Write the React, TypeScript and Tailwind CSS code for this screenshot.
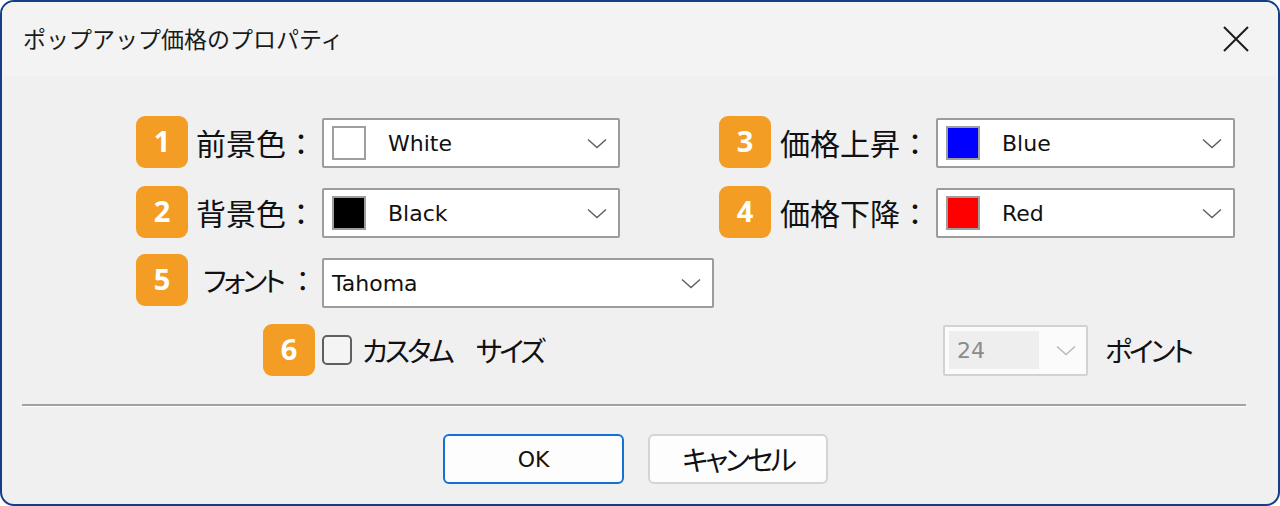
import type { ReactNode } from 'react';

const jp = "font-['Noto_Sans_CJK_JP',sans-serif]";
const latin = "font-['DejaVu_Sans',sans-serif]";
// katakana in the original dialog font is narrower than Noto's
const kana = `${jp} text-[28px] text-[#111] tracking-[-3px] [font-feature-settings:'palt']`;

function Badge({ n }: { n: number }) {
  return (
    <div className="flex h-[52px] w-[52px] shrink-0 items-center justify-center rounded-[9px] bg-[#f49d25] pb-[2px] font-['Open_Sans',sans-serif] text-[29px] font-bold text-white">
      {n}
    </div>
  );
}

function Chevron({ tone = '#5e5e5e' }: { tone?: string }) {
  return (
    <svg width="20" height="11" viewBox="0 0 20 11" fill="none">
      <path d="M1 1.5L10 9.5L19 1.5" stroke={tone} strokeWidth="1.4" />
    </svg>
  );
}

function Select({ width, swatch, label }: { width: string; swatch?: string; label: string }) {
  return (
    <div
      className={`flex h-[50px] items-center justify-between rounded-[2px] border-2 border-[#9c9c9c] bg-white pl-[8px] pr-[11px] ${width}`}
    >
      <div className="flex items-center">
        {swatch && (
          <div className={`mr-[22px] h-[34px] w-[34px] border-2 border-[#9e9e9e] ${swatch}`} />
        )}
        <span className={`${latin} text-[22px] text-[#111]`}>{label}</span>
      </div>
      <Chevron />
    </div>
  );
}

function Label({ children, box, pad }: { children: ReactNode; box: string; pad: string }) {
  return (
    <div className={`flex h-[52px] shrink-0 items-center ${box} ${pad} ${jp} text-[30px] text-[#111]`}>
      {children}
    </div>
  );
}

export default function App() {
  return (
    <div className="h-[506px] w-[1280px] bg-white">
      <div className="flex h-full flex-col overflow-hidden rounded-[14px] border-2 border-[#123f88] bg-[#f0f0f0]">
        <div className="flex h-[74px] shrink-0 items-center justify-between bg-[#f3f3f3] pl-[21px] pr-[29px]">
          <div className={`${jp} pb-[2px] text-[23px] text-[#1b1b1b]`}>ポップアップ価格のプロパティ</div>
          <svg width="26" height="26" viewBox="0 0 26 26" fill="none">
            <path d="M1 1L25 25M25 1L1 25" stroke="#1c1c1c" strokeWidth="2" />
          </svg>
        </div>

        <div className="flex flex-col pt-[40px]">
          <div className="flex items-start pl-[134px]">
            <div className="flex w-[583px] items-start">
              <Badge n={1} />
              <Label box="w-[134px]" pad="pl-[8px]">前景色：</Label>
              <div className="mt-[2px]">
                <Select width="w-[298px]" swatch="bg-white" label="White" />
              </div>
            </div>
            <div className="flex items-start">
              <Badge n={3} />
              <Label box="w-[165px]" pad="pl-[9px]">価格上昇：</Label>
              <div className="mt-[2px]">
                <Select width="w-[299px]" swatch="bg-[#0000ff]" label="Blue" />
              </div>
            </div>
          </div>

          <div className="mt-[18px] flex items-start pl-[134px]">
            <div className="flex w-[583px] items-start">
              <Badge n={2} />
              <Label box="w-[134px]" pad="pl-[8px]">背景色：</Label>
              <div className="mt-[2px]">
                <Select width="w-[298px]" swatch="bg-black" label="Black" />
              </div>
            </div>
            <div className="flex items-start">
              <Badge n={4} />
              <Label box="w-[165px]" pad="pl-[9px]">価格下降：</Label>
              <div className="mt-[2px]">
                <Select width="w-[299px]" swatch="bg-[#ff0000]" label="Red" />
              </div>
            </div>
          </div>

          <div className="mt-[16px] flex items-start pl-[134px]">
            <Badge n={5} />
            <div className="flex h-[52px] w-[134px] shrink-0 items-center pl-[15px]">
              <span className={kana}>フォント</span>
              <span className={`${jp} ml-[6px] text-[28px] text-[#111]`}>：</span>
            </div>
            <div className="mt-[4px]">
              <Select width="w-[392px]" label="Tahoma" />
            </div>
          </div>

          <div className="mt-[16px] flex items-center pl-[261px]">
            <Badge n={6} />
            <div className="ml-[7px] h-[30px] w-[30px] rounded-[5px] border-2 border-[#5f5f5f] bg-[#f4f4f4]" />
            <div className={`ml-[10px] w-[581px] ${kana}`}>
              カスタム<span className="ml-[24px]">サイズ</span>
            </div>
            <div className="flex h-[51px] w-[145px] items-center justify-between rounded-[2px] border-2 border-[#d2d2d2] bg-[#fbfbfb] p-[4px] pr-[10px]">
              <div className={`flex h-[38px] w-[90px] items-center bg-[#eeeeee] pl-[8px] ${latin} text-[22px] text-[#8a8a8a]`}>
                24
              </div>
              <Chevron tone="#b8b8b8" />
            </div>
            <div className={`ml-[17px] ${kana}`}>ポイント</div>
          </div>

          <div className="ml-[20px] mr-[32px] mt-[28px] h-[2px] bg-[#a2a2a2]" />
          <div className="ml-[20px] mr-[32px] h-[1px] bg-white" />

          <div className="mt-[27px] flex items-start gap-[24px] pl-[441px]">
            <button
              type="button"
              className={`flex h-[50px] w-[181px] items-center justify-center rounded-[6px] border-2 border-[#1570d6] bg-[#fdfdfd] ${latin} text-[22px] text-[#111]`}
            >
              OK
            </button>
            <button
              type="button"
              className={`flex h-[50px] w-[180px] items-center justify-center rounded-[6px] border-2 border-[#d4d4d4] bg-[#fdfdfd] ${kana} tracking-[-2px]`}
            >
              キャンセル
            </button>
          </div>
        </div>
      </div>
    </div>
  );
}
